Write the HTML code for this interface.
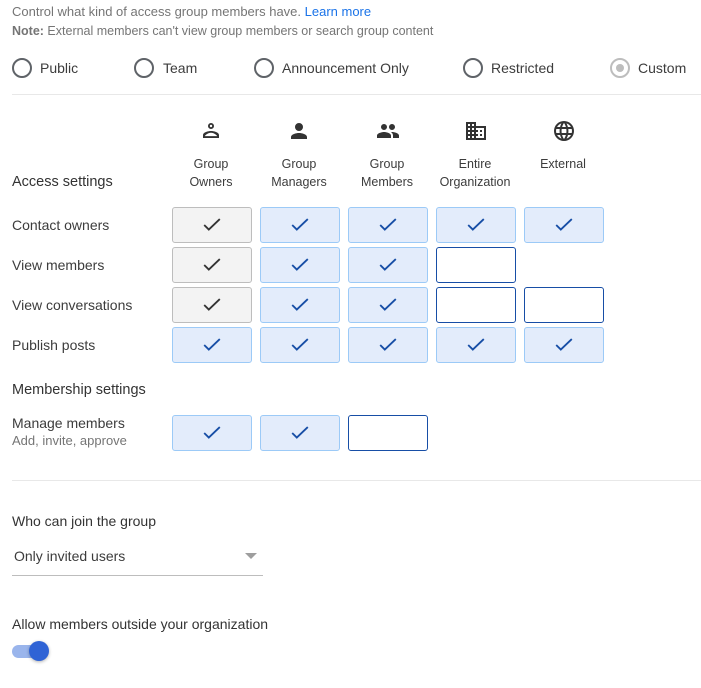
<!DOCTYPE html>
<html><head><style>
body{margin:0;width:701px;height:688px;background:#fff;font-family:"Liberation Sans",sans-serif;position:relative;overflow:hidden}
.a{position:absolute;white-space:nowrap}
.g{color:#757575;font-size:13px}
.t{color:#3c3c3c;font-size:14px}
.r{position:absolute;width:16px;height:16px;border:2px solid #5f6368;border-radius:50%;top:58px}
.lab{position:absolute;top:60px;font-size:14px;color:#3c3c3c}
.c{position:absolute;width:78px;height:34px;border-radius:3px;box-sizing:content-box}
.gr{background:#f3f3f3;border:1px solid #bdbdbd}
.bl{background:#e3ecfb;border:1px solid #9ccaf7}
.em{background:#fff;border:1px solid #174ea6}
.c svg{position:absolute;left:28px;top:6px}
.h{position:absolute;top:155px;width:88px;text-align:center;font-size:12.5px;color:#3c3c3c;line-height:18px}
.ic{position:absolute;top:119px}
.line{position:absolute;left:12px;width:689px;height:1px;background:#e8e8e8}
</style></head><body>
<div class="a g" style="left:12px;top:4px">Control what kind of access group members have. <span style="color:#1a73e8">Learn more</span></div>
<div class="a g" style="left:12px;top:24px;font-size:12.5px"><b style="font-weight:bold;color:#757575">Note:</b> External members can't view group members or search group content</div>
<div class="r" style="left:12px"></div><div class="lab" style="left:40px">Public</div>
<div class="r" style="left:134px"></div><div class="lab" style="left:163px">Team</div>
<div class="r" style="left:254px"></div><div class="lab" style="left:282px">Announcement Only</div>
<div class="r" style="left:463px"></div><div class="lab" style="left:491px">Restricted</div>
<div class="r" style="left:610px;border-color:#bdbdbd"><div style="position:absolute;left:4px;top:4px;width:8px;height:8px;border-radius:50%;background:#bdbdbd"></div></div><div class="lab" style="left:638px">Custom</div>
<div class="line" style="top:94px"></div>

<svg class="ic" style="left:199px" width="24" height="24" viewBox="0 0 24 24"><path fill="#333" d="M12 4a3 3 0 1 0 0 6 3 3 0 0 0 0-6zm0 1.8a1.2 1.2 0 1 1 0 2.4 1.2 1.2 0 0 1 0-2.4zM12 12c-2.7 0-8 1.3-8 4v3h16v-3c0-2.7-5.3-4-8-4zm-6.1 5.1c0-.6 3.1-3.3 6.1-3.3s6.1 2.7 6.1 3.3z"/></svg>
<svg class="ic" style="left:287px" width="24" height="24" viewBox="0 0 24 24"><path fill="#333" d="M12 12a4 4 0 1 0 0-8 4 4 0 0 0 0 8zm0 2c-2.7 0-8 1.3-8 4v2h16v-2c0-2.7-5.3-4-8-4z"/></svg>
<svg class="ic" style="left:376px" width="24" height="24" viewBox="0 0 24 24"><path fill="#333" d="M16 11a3 3 0 1 0 0-6 3 3 0 0 0 0 6zm-8 0a3 3 0 1 0 0-6 3 3 0 0 0 0 6zm0 2c-2.3 0-7 1.2-7 3.5V19h14v-2.5C15 14.2 10.3 13 8 13zm8 0c-.3 0-.6 0-1 .1 1.2.8 2 1.9 2 3.4V19h6v-2.5c0-2.3-4.7-3.5-7-3.5z"/></svg>
<svg class="ic" style="left:464px" width="24" height="24" viewBox="0 0 24 24"><path fill="#333" d="M12 7V3H2v18h20V7H12zM6 19H4v-2h2v2zm0-4H4v-2h2v2zm0-4H4V9h2v2zm0-4H4V5h2v2zm4 12H8v-2h2v2zm0-4H8v-2h2v2zm0-4H8V9h2v2zm0-4H8V5h2v2zm10 12h-8v-2h2v-2h-2v-2h2v-2h-2V9h8v10zm-2-8h-2v2h2v-2zm0 4h-2v2h2v-2z"/></svg>
<svg class="ic" style="left:552px" width="24" height="24" viewBox="0 0 24 24"><path fill="#333" d="M12 2a10 10 0 1 0 0 20 10 10 0 0 0 0-20zm6.9 6h-3a15.7 15.7 0 0 0-1.4-3.6A8 8 0 0 1 18.9 8zM12 4c.8 1.2 1.5 2.5 1.9 4h-3.8c.4-1.4 1.1-2.8 1.9-4zM4.3 14a8 8 0 0 1 0-4h3.4a16 16 0 0 0 0 4H4.3zm.8 2h3a15.7 15.7 0 0 0 1.4 3.6A8 8 0 0 1 5.1 16zm3-8h-3a8 8 0 0 1 4.3-3.6C8.8 5.600 8.4 6.8 8.1 8zM12 20c-.8-1.2-1.5-2.5-1.9-4h3.8c-.4 1.4-1.1 2.8-1.9 4zm2.3-6H9.7a14.7 14.7 0 0 1 0-4h4.6a14.7 14.7 0 0 1 0 4zm.3 5.6c.6-1.1 1.1-2.3 1.4-3.6h3a8 8 0 0 1-4.4 3.6zm1.7-5.6a16 16 0 0 0 0-4h3.4a8 8 0 0 1 0 4h-3.4z"/></svg>

<div class="h" style="left:167px">Group<br>Owners</div>
<div class="h" style="left:255px">Group<br>Managers</div>
<div class="h" style="left:343px">Group<br>Members</div>
<div class="h" style="left:431px">Entire<br>Organization</div>
<div class="h" style="left:519px">External</div>

<div class="a" style="left:12px;top:174px;font-size:14.5px;color:#333">Access settings</div>
<div class="a t" style="left:12px;top:217px">Contact owners</div>
<div class="a t" style="left:12px;top:257px">View members</div>
<div class="a t" style="left:12px;top:297px">View conversations</div>
<div class="a t" style="left:12px;top:337px">Publish posts</div>
<div class="a" style="left:12px;top:382px;font-size:14.5px;color:#333">Membership settings</div>
<div class="a t" style="left:12px;top:415px">Manage members</div>
<div class="a g" style="left:12px;top:433px">Add, invite, approve</div>

<div id="grid"></div>
<script>
var rows=[[207,'g','b','b','b','b'],[247,'g','b','b','e',''],[287,'g','b','b','e','e'],[327,'b','b','b','b','b'],[415,'b','b','e','','']];
var h='';
rows.forEach(function(r){for(var i=1;i<6;i++){var k=r[i];if(!k)continue;var x=172+(i-1)*88;
var cls=k=='g'?'gr':k=='b'?'bl':'em';var col=k=='g'?'#333':'#174ea6';
h+='<div class="c '+cls+'" style="left:'+x+'px;top:'+r[0]+'px">'+(k=='e'?'':'<svg width="22" height="22" viewBox="0 0 24 24"><path d="M3.5 12l5 5L20.5 5.5" fill="none" stroke="'+col+'" stroke-width="2"/></svg>')+'</div>';}});
document.getElementById('grid').innerHTML=h;
</script>

<div class="line" style="top:480px"></div>
<div class="a t" style="left:12px;top:513px;color:#333">Who can join the group</div>
<div class="a t" style="left:14px;top:548px">Only invited users</div>
<div style="position:absolute;left:245px;top:553px;width:0;height:0;border-left:6px solid transparent;border-right:6px solid transparent;border-top:6px solid #9e9e9e"></div>
<div style="position:absolute;left:12px;top:575px;width:251px;height:1px;background:#bdbdbd"></div>
<div class="a t" style="left:12px;top:616px;color:#333">Allow members outside your organization</div>
<div style="position:absolute;left:12px;top:645px;width:34px;height:13px;border-radius:7px;background:#9ab5ec"></div>
<div style="position:absolute;left:29px;top:641px;width:20px;height:20px;border-radius:50%;background:#2f63d5;box-shadow:0 1px 3px rgba(0,0,0,.3)"></div>
</body></html>
